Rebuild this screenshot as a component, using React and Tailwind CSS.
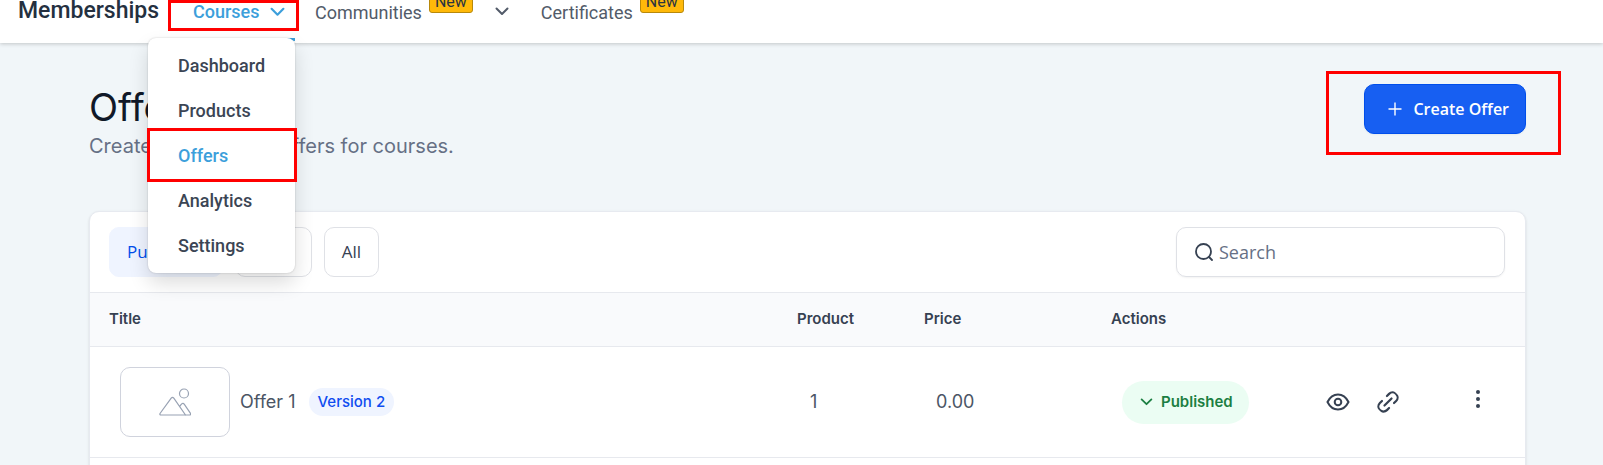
import React, { useState } from "react";

const menuItems = ["Dashboard", "Products", "Offers", "Analytics", "Settings"];
const filters = ["Published", "Draft", "All"];
const offers = [
  { id: 1, title: "Offer 1", version: "Version 2", products: 1, price: "0.00" },
];

const Chevron = ({ className }) => (
  <svg
    className={className}
    viewBox="0 0 14 9"
    fill="none"
    stroke="currentColor"
    strokeLinecap="round"
    strokeLinejoin="round"
  >
    <path d="M1.5 1.5 7 7l5.5-5.5" />
  </svg>
);

const NewBadge = () => (
  <span className="self-start mt-3 h-[21px] px-[5px] rounded-[3px] border border-[#b8890b] bg-[#ffb909] text-base leading-[18px] text-[#2a3441]">
    New
  </span>
);

// Red frame drawn over the element that it points at
const Highlight = ({ className }) => (
  <span
    aria-hidden="true"
    className={`absolute z-30 pointer-events-none border-3 border-[#ff0000] ${className}`}
  />
);

const CoursesMenu = () => (
  <ul className="absolute z-20 left-[-20px] top-[58px] w-[147px] h-[235px] pt-[5px] rounded-lg bg-white shadow-[0_0_2px_rgba(0,0,0,0.2),0_10px_20px_rgba(0,0,0,0.14)]">
    {menuItems.map((item) => (
      <li key={item} className="relative">
        <a
          href="#"
          className={`flex items-center h-[45px] px-[30px] text-lg font-medium ${
            item === "Offers" ? "text-[#3c9fdb]" : "text-[#3b4554]"
          }`}
        >
          {item}
        </a>
        {item === "Offers" && (
          <Highlight className="left-[-1px] right-[-2px] top-[-5px] bottom-[-4px]" />
        )}
      </li>
    ))}
  </ul>
);

const Header = () => (
  <header className="relative z-10 flex -mt-5 h-[63px] pl-[18px] bg-white shadow-[0_1px_4px_rgba(0,0,0,0.2)] font-[Roboto,sans-serif] text-lg text-[#525b69]">
    <h2 className="flex items-center w-[150px] pb-0.5 text-[23px] font-medium text-[#243040]">
      Memberships
    </h2>
    <nav className="flex">
      <div className="relative w-[131px]">
        <button className="flex items-center w-[127px] h-[61px] gap-[10px] pl-[25px] pt-[5px] font-medium text-[#3c9fdb] border-b-3 border-[#3c9fdb]">
          Courses
          <Chevron className="w-[15px] h-[10px] stroke-2" />
        </button>
        <Highlight className="inset-x-0 top-5 h-[31px]" />
        <CoursesMenu />
      </div>
      <div className="flex pl-4 gap-[7px]">
        <a href="#" className="flex items-center pt-0.5">
          Communities
        </a>
        <NewBadge />
        <button className="pl-[15px] pr-8" aria-label="More communities">
          <Chevron className="w-[14px] h-[9px] stroke-2" />
        </button>
      </div>
      <div className="flex gap-[7px]">
        <a href="#" className="flex items-center pt-0.5">
          Certificates
        </a>
        <NewBadge />
      </div>
    </nav>
  </header>
);

const OfferRow = ({ offer }) => (
  <tr className="h-[111px] border-b border-[#e7e9ee] text-lg text-[#4b5565]">
    <td className="pl-[30px]">
      <div className="flex items-center">
        <div className="flex items-center justify-center w-[110px] h-[70px] mr-[10px] rounded-[10px] border border-[#d0d3dd]">
          <svg
            className="w-8 h-7"
            viewBox="0 0 32 28"
            fill="none"
            stroke="#98a2b3"
            strokeWidth="1.2"
            strokeLinejoin="round"
          >
            <circle cx="25" cy="5.5" r="4.5" />
            <path d="M1 25.5 12.2 10.2q1.3-1.6 2.6 0L26.5 27H2q-1.6 0-1-1.5z" />
            <path d="m20.5 18.5 2.2-2.6q1.3-1.2 2.5.3l6.3 9.2q.5 1.6-1 1.6h-4" />
          </svg>
        </div>
        <span>{offer.title}</span>
        <span className="ml-[13px] px-[9px] rounded-full bg-[#eff4ff] text-[15px] leading-7 font-medium text-[#0f4df0]">
          {offer.version}
        </span>
      </div>
    </td>
    <td className="pl-[33px]">{offer.products}</td>
    <td className="pl-8">{offer.price}</td>
    <td className="pl-[31px]">
      <div className="flex items-center text-[#364152]">
        <button className="flex items-center h-[43px] mr-[77px] gap-2 pl-[18px] pr-4 rounded-full bg-[#ebfdf3] text-[15px] font-semibold text-[#1b7f42]">
          <Chevron className="w-[13px] h-2 stroke-2" />
          Published
        </button>
        <button className="mr-[26px]" aria-label="Preview">
          <svg
            className="w-6 h-6"
            viewBox="0 0 24 24"
            fill="none"
            stroke="currentColor"
            strokeWidth="2"
          >
            <path d="M1.5 12C4 7 8 4.5 12 4.5S20 7 22.5 12C20 17 16 19.5 12 19.5S4 17 1.5 12z" />
            <circle cx="12" cy="12" r="3.3" />
          </svg>
        </button>
        <button aria-label="Copy link">
          <svg
            className="w-6 h-6 -rotate-45"
            viewBox="0 0 24 24"
            fill="none"
            stroke="currentColor"
            strokeWidth="2.2"
            strokeLinecap="round"
          >
            <path d="M8.5 17H5.5a5 5 0 0 1 0-10H8.5M15.5 7h3a5 5 0 1 1 0 10H15.5M7 12h10" />
          </svg>
        </button>
        <button className="ml-auto mr-[37px]" aria-label="More actions">
          <svg className="w-5 h-6" viewBox="0 0 20 24" fill="currentColor">
            <circle cx="10" cy="2" r="2" />
            <circle cx="10" cy="9" r="2" />
            <circle cx="10" cy="16" r="2" />
          </svg>
        </button>
      </div>
    </td>
  </tr>
);

const App = () => {
  const [filter, setFilter] = useState("Published");
  const [search, setSearch] = useState("");

  return (
    <div className="h-screen flow-root overflow-hidden bg-[#f1f6f9] font-[Inter,sans-serif]">
      <Header />

      <main className="pt-[41px] pl-[89px] pr-[77px]">
        <div className="flex items-start justify-between">
          <div>
            <h1 className="text-[38px] leading-[47px] text-[#101828]">
              Offers
            </h1>
            <p className="text-xl leading-[30px] text-[#667085]">
              Create and manage offers for courses.
            </p>
          </div>
          <div className="relative">
            <button className="flex items-center h-[50px] gap-[11px] pl-[23px] pr-4 rounded-[10px] border border-[#004eeb] bg-[#175ff2] font-['Open_Sans',sans-serif] text-base font-semibold text-white shadow-xs">
              <svg
                className="w-[14px] h-[14px]"
                viewBox="0 0 14 14"
                stroke="currentColor"
                strokeWidth="1.4"
              >
                <path d="M7 .5v13M.5 7h13" />
              </svg>
              Create Offer
            </button>
            <Highlight className="left-[-38px] right-[-35px] top-[-13px] bottom-[-21px]" />
          </div>
        </div>

        <section className="mt-[50px] pb-28 rounded-[10px] border border-[#e7eaf0] bg-white shadow-sm">
          <div className="flex items-center justify-between py-[15px] pl-[19px] pr-5">
            <div className="flex gap-3 font-['Open_Sans',sans-serif] text-[17px] font-medium">
              {filters.map((name) => (
                <button
                  key={name}
                  onClick={() => setFilter(name)}
                  className={`h-[50px] px-[17px] rounded-[10px] border ${
                    filter === name
                      ? "border-[#eff4ff] bg-[#eff4ff] text-[#004eeb]"
                      : "border-[#dfe1e6] bg-white text-[#364152]"
                  }`}
                >
                  {name}
                </button>
              ))}
            </div>
            <label className="flex items-center w-[329px] h-[50px] gap-[6px] pl-[18px] rounded-[10px] border border-[#dfe1e6] text-[#364152] shadow-xs">
              <svg
                className="w-[18px] h-[18px]"
                viewBox="0 0 18 18"
                fill="none"
                stroke="currentColor"
                strokeWidth="1.8"
                strokeLinecap="round"
              >
                <circle cx="8.5" cy="8.5" r="7.5" />
                <path d="m14 14 3 3" />
              </svg>
              <input
                type="text"
                aria-label="Search"
                placeholder="Search"
                value={search}
                onChange={(e) => setSearch(e.target.value)}
                className="w-64 outline-none font-['Open_Sans',sans-serif] text-lg placeholder:text-[#667085]"
              />
            </label>
          </div>

          <table className="w-full table-fixed text-left">
            <thead>
              <tr className="h-[54px] border-y border-[#e7e9ee] bg-[#f9fafc] text-[15px] text-[#364152]">
                <th className="pl-[19px] font-semibold">Title</th>
                <th className="w-[127px] pl-5 font-semibold">Product</th>
                <th className="w-[187px] pl-5 font-semibold">Price</th>
                <th className="w-[434px] pl-5 font-semibold">Actions</th>
              </tr>
            </thead>
            <tbody>
              {offers.map((offer) => (
                <OfferRow key={offer.id} offer={offer} />
              ))}
            </tbody>
          </table>
        </section>
      </main>
    </div>
  );
};

export default App;
